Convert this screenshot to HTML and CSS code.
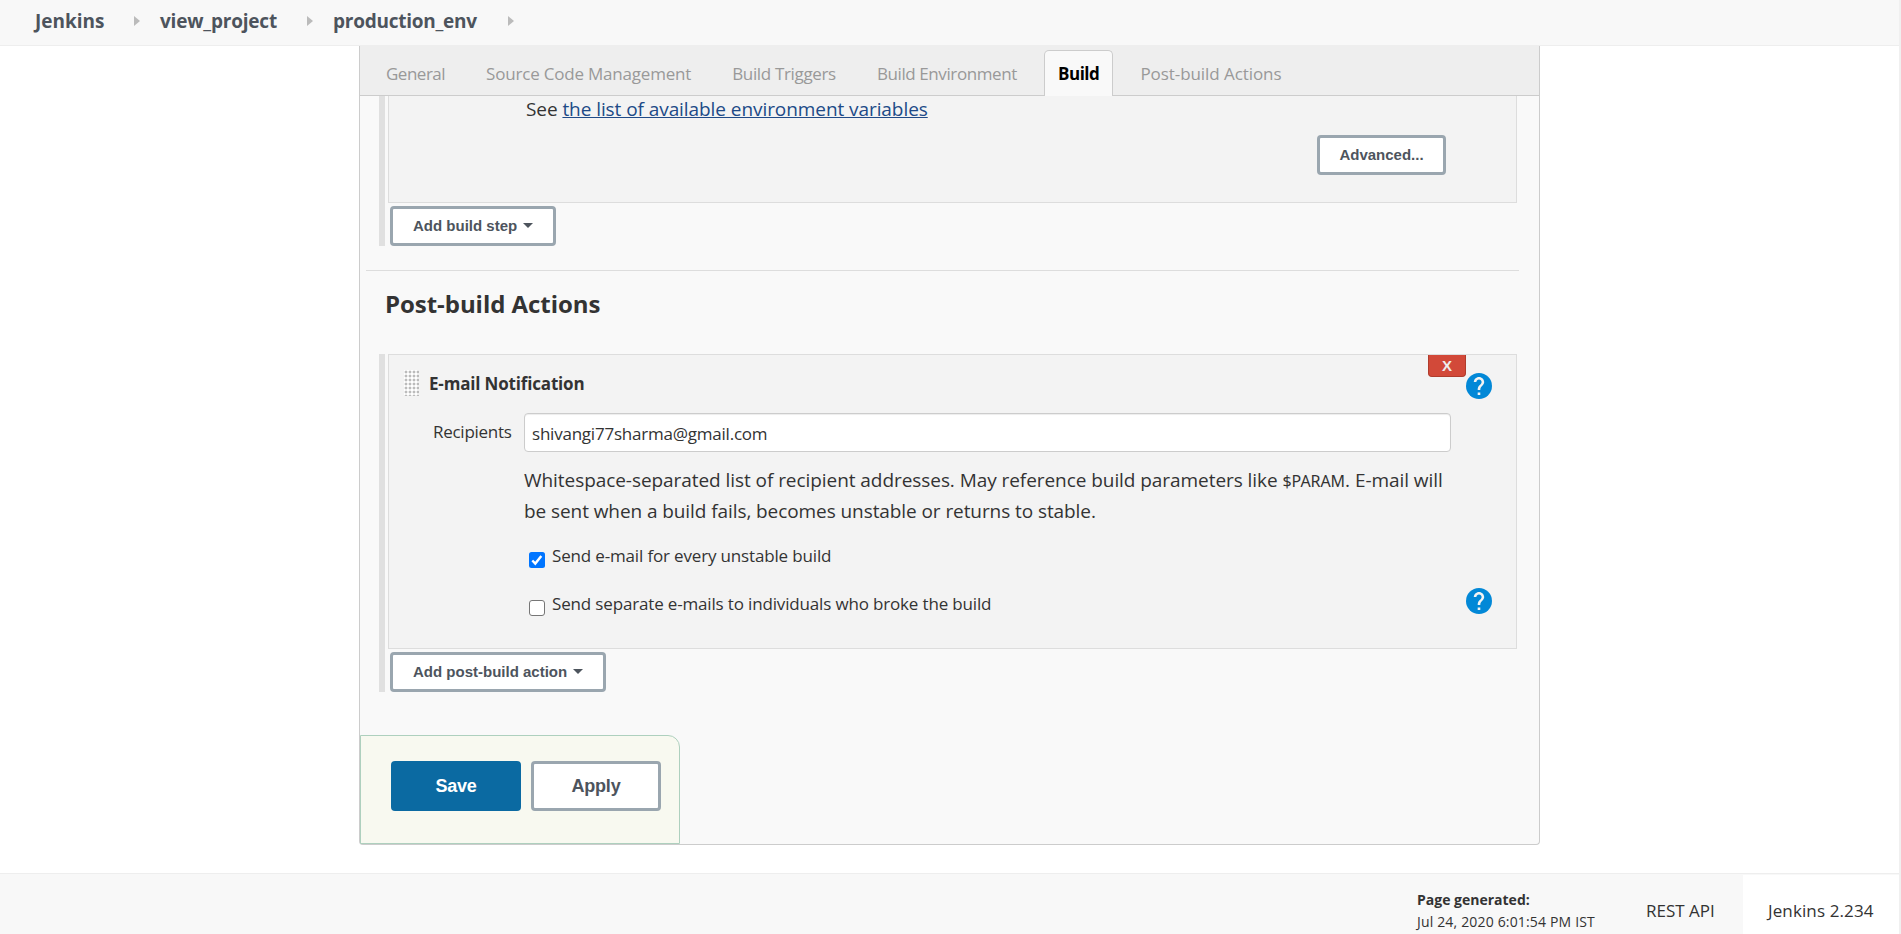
FILE: index.html
```html
<!DOCTYPE html>
<html lang="en">
<head>
<meta charset="utf-8">
<title>production_env Config [Jenkins]</title>
<link rel="stylesheet" href="styles.css">
</head>
<body>
<div class="page">
  <nav class="breadcrumbs">
    <a class="crumb crumb-a">Jenkins</a><i class="sep"></i>
    <a class="crumb crumb-b">view_project</a><i class="sep"></i>
    <a class="crumb crumb-c">production_env</a><i class="sep"></i>
  </nav>
  <main class="panel">
    <div class="tabs">
      <a class="tab t1">General</a>
      <a class="tab t2">Source Code Management</a>
      <a class="tab t3">Build Triggers</a>
      <a class="tab t4">Build Environment</a>
      <a class="tab t5 active">Build</a>
      <a class="tab t6">Post-build Actions</a>
    </div>
    <section class="group group-build">
      <div class="chunk chunk-build">
        <p class="see">See <a class="link">the list of available environment variables</a></p>
        <button class="btn btn-advanced">Advanced...</button>
      </div>
      <button class="btn btn-add-step"><span>Add build step</span><i class="caret"></i></button>
    </section>
    <h2 class="heading">Post-build Actions</h2>
    <section class="group group-post">
      <div class="chunk chunk-post">
        <div class="chunk-head">
          <i class="handle"></i>
          <b class="chunk-title">E-mail Notification</b>
          <button class="delete">X</button>
          <svg class="help" viewBox="2 2 20 20"><circle cx="12" cy="12" r="10" fill="#0288d7"/><path fill="#f3f3f3" d="M13 19h-2v-2h2v2zm2.070-7.750l-.9.920C13.450 12.900 13 13.500 13 15h-2v-.5c0-1.100.450-2.100 1.170-2.830l1.240-1.260c.370-.360.590-.860.590-1.410 0-1.100-.9-2-2-2s-2 .9-2 2H8c0-2.210 1.790-4 4-4s4 1.790 4 4c0 .880-.360 1.680-.930 2.250z"/></svg>
        </div>
        <div class="recipients">
          <label class="label">Recipients</label>
          <div class="input">shivangi77sharma@gmail.com</div>
        </div>
        <div class="hint">
          <div class="hint-1">Whitespace-separated list of recipient addresses. May reference build parameters like <code>$PARAM</code>. E-mail will</div>
          <div class="hint-2">be sent when a build fails, becomes unstable or returns to stable.</div>
        </div>
        <label class="check"><svg class="box" viewBox="0 0 16 16"><rect width="16" height="16" rx="2.500" fill="#0075ff"/><path d="M3.300 8.500l3 3.100 6-7.600" fill="none" stroke="#fff" stroke-width="2.400"/></svg>Send e-mail for every unstable build</label>
        <div class="check-row">
          <label class="check"><svg class="box" viewBox="0 0 16 16"><rect x=".5" y=".5" width="15" height="15" rx="2.500" fill="#fff" stroke="#767676"/></svg>Send separate e-mails to individuals who broke the build</label>
          <svg class="help" viewBox="2 2 20 20"><circle cx="12" cy="12" r="10" fill="#0288d7"/><path fill="#f3f3f3" d="M13 19h-2v-2h2v2zm2.070-7.750l-.9.920C13.450 12.900 13 13.500 13 15h-2v-.5c0-1.100.450-2.100 1.170-2.830l1.240-1.260c.370-.360.590-.860.590-1.410 0-1.100-.9-2-2-2s-2 .9-2 2H8c0-2.210 1.790-4 4-4s4 1.790 4 4c0 .880-.360 1.680-.930 2.250z"/></svg>
        </div>
      </div>
      <button class="btn btn-add-post"><span>Add post-build action</span><i class="caret"></i></button>
    </section>
    <div class="actions">
      <button class="save">Save</button>
      <button class="apply">Apply</button>
    </div>
  </main>
  <footer class="footer">
    <div class="generated"><b>Page generated:</b><div class="date">Jul 24, 2020 6:01:54 PM IST</div></div>
    <a class="rest">REST API</a>
    <a class="version">Jenkins 2.234</a>
  </footer>
</div>
</body>
</html>
```
FILE: styles.css
```css
* { box-sizing: border-box; }
body { margin: 0; background: #fff; color: #333; font-family: "Open Sans", "Noto Sans", sans-serif; font-size: 17px; overflow: hidden; }
button { font-family: "Liberation Sans", sans-serif; font-weight: 700; color: #4d545d; padding: 0; }
.page { width: 1901px; height: 934px; display: flex; flex-direction: column; border-right: 2px solid #f0f0f0; }
.breadcrumbs { height: 46px; flex: none; display: flex; align-items: flex-start; padding: 8px 0 0 35px; background: #f8f8f8; border-bottom: 1px solid #eee; }
.crumb { font-size: 19px; line-height: 26px; font-weight: 700; color: #4d545d; white-space: nowrap; }
.crumb-a { width: 70px; }
.crumb-b { width: 118px; letter-spacing: -.2px; }
.crumb-c { width: 146px; letter-spacing: -.25px; }
.sep { width: 0; height: 0; margin: 8px 20px 0 29px; border-left: 6px solid #bbb; border-top: 5px solid transparent; border-bottom: 5px solid transparent; }
.panel { width: 1181px; height: 799px; margin-left: 359px; flex: none; display: flex; flex-direction: column; background: #f9f9f9; border: 1px solid #ccc; border-top: 0; border-radius: 0 0 4px 4px; }
.tabs { height: 50px; flex: none; display: flex; align-items: flex-end; gap: 13px; padding-left: 12px; background: #eee; border-bottom: 1px solid #ccc; }
.tab { height: 46px; margin-bottom: -1px; padding: 10px 13px 0; border: 1px solid transparent; border-bottom: 0; line-height: 26px; color: #999; white-space: nowrap; }
.tab.active { background: #f9f9f9; border-color: #ccc; border-radius: 5px 5px 0 0; color: #000; font-weight: 700; }
.t1 { letter-spacing: -.5px; }
.t2 { letter-spacing: -.2px; }
.t3 { letter-spacing: -.34px; }
.t4 { letter-spacing: -.4px; }
.t5 { letter-spacing: -.45px; }
.t6 { letter-spacing: -.07px; }
.group { margin-left: 19px; border-left: 6px solid #e0e0e0; padding-left: 3px; width: 1138px; flex: none; }
.group-build { height: 150px; }
.group-post { height: 338px; margin-top: 31px; }
.chunk { width: 1129px; border: 1px solid #ddd; background: #f3f3f3; }
.chunk-build { height: 107px; border-top: 0; display: flex; flex-direction: column; }
.see { margin: 0 0 0 137px; font-size: 19px; line-height: 27px; letter-spacing: -.07px; white-space: nowrap; }
.link { color: #204a87; text-decoration: underline; }
.btn { height: 40px; border: 3px solid #9aa6af; border-radius: 4px; background: #fff; padding-bottom: 2px; font-size: 15px; display: flex; align-items: center; }
.btn-advanced { width: 129px; margin: 12px 0 0 928px; justify-content: center; }
.btn-add-step { width: 166px; margin: 3px 0 0 2px; padding-left: 20px; }
.btn-add-post { width: 216px; margin: 3px 0 0 2px; padding-left: 20px; }
.caret { margin-left: 6px; border-top: 5px solid #4d545d; border-left: 5px solid transparent; border-right: 5px solid transparent; }
.heading { width: 1153px; height: 53px; margin: 24px 0 0 6px; padding: 16px 0 0 19px; border-top: 1px solid #ddd; font-size: 24px; line-height: 34px; letter-spacing: -.05px; font-weight: 700; white-space: nowrap; }
.chunk-post { height: 295px; }
.chunk-head { height: 58px; display: flex; align-items: flex-start; }
.handle { width: 15px; height: 26px; margin: 15px 0 0 15px; background: radial-gradient(circle at 2px 2px, #bbb 1px, #fff 1.800px) 0 0 / 4px 4px; }
.chunk-title { margin: 16px 0 0 10px; line-height: 25px; width: 160px; letter-spacing: -.17px; white-space: nowrap; }
.delete { width: 38px; height: 22px; margin-left: 839px; border: 1px solid #b03c2c; border-top: 0; border-radius: 0 0 4px 4px; background: #d24939; color: #eee; font-size: 15px; }
.help { width: 26px; height: 26px; margin-top: 18px; flex: none; }
.recipients { display: flex; height: 40px; }
.label { width: 135px; padding: 6px 0 0 44px; line-height: 26px; letter-spacing: -.27px; white-space: nowrap; }
.input { width: 927px; height: 39px; border: 1px solid #ccc; border-radius: 4px; background: #fff; box-shadow: inset 0 1px 1px rgba(0,0,0,.075); padding: 7px 0 0 7px; line-height: 25px; letter-spacing: -.22px; white-space: nowrap; }
.hint { margin: 12px 0 0 135px; font-size: 19px; line-height: 31px; white-space: nowrap; }
.hint-1 { height: 31px; letter-spacing: -.06px; }
.hint-2 { letter-spacing: -.08px; }
code { font-family: "Noto Sans", sans-serif; font-size: 16px; }
.check { display: flex; height: 48px; margin-left: 140px; line-height: 25px; letter-spacing: -.16px; white-space: nowrap; }
.chunk-post > .check { margin-top: 16px; }
.box { width: 16px; height: 16px; margin: 9px 7px 0 0; flex: none; }
.check-row { display: flex; width: 1103px; justify-content: space-between; }
.check-row .help { margin-top: -3px; }
.actions { width: 320px; height: 109px; margin-top: auto; display: flex; gap: 10px; padding: 25px 0 0 30px; background: #f8f9f0; border: 1px solid #aed0be; border-top-right-radius: 12px; }
.save, .apply { width: 130px; height: 50px; border-radius: 4px; font-size: 18px; }
.save { border: 0; background: #0b6aa2; color: #fff; letter-spacing: -.3px; }
.apply { border: 3px solid #9aa6af; background: #fff; letter-spacing: -.2px; }
.footer { height: 61px; margin-top: 28px; flex: none; display: flex; background: #f8f8f8; border-top: 1px solid #eee; padding-left: 1417px; white-space: nowrap; }
.generated { width: 229px; padding-top: 15px; font-size: 14px; line-height: 22px; }
.date { letter-spacing: .17px; }
.rest { width: 97px; padding-top: 24px; line-height: 26px; font-weight: 500; font-size: 17px; }
.version { flex: 1; margin-top: 1px; padding: 23px 0 0 25px; background: #fff; line-height: 26px; font-weight: 500; font-size: 17px; letter-spacing: .12px; }
```
